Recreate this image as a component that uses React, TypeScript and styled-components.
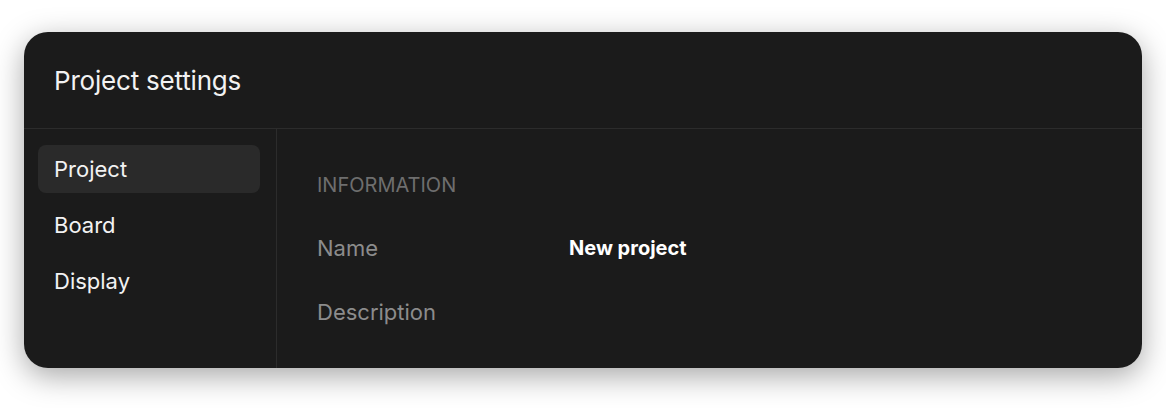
import React from 'react';
import styled, { createGlobalStyle } from 'styled-components';

const GlobalStyle = createGlobalStyle`
  html, body {
    margin: 0;
    padding: 0;
    background: #ffffff;
  }

  body {
    font-family: 'Inter', 'Noto Sans', sans-serif;
    -webkit-font-smoothing: antialiased;
  }

  * {
    box-sizing: border-box;
  }
`;

const Page = styled.div`
  padding: 32px 24px 40px;
`;

const Card = styled.div`
  display: flex;
  flex-direction: column;
  height: 336px;
  background-color: #1b1b1b;
  border-radius: 24px;
  overflow: hidden;
  box-shadow: 0 8px 30px rgba(0, 0, 0, 0.35);
`;

const Header = styled.div`
  display: flex;
  align-items: center;
  height: 97px;
  padding: 0 30px;
  border-bottom: 1px solid #2c2c2c;
`;

const Title = styled.h1`
  margin: 0;
  font-size: 26px;
  font-weight: 400;
  color: #f2f2f2;
  letter-spacing: -0.2px;
`;

const Body = styled.div`
  flex: 1;
  display: flex;
`;

const Sidebar = styled.nav`
  width: 253px;
  padding: 16px 16px 16px 14px;
  display: flex;
  flex-direction: column;
  gap: 8px;
  border-right: 1px solid #2c2c2c;
`;

const NavItem = styled.div<{ $active?: boolean }>`
  height: 48px;
  display: flex;
  align-items: center;
  padding: 0 16px;
  border-radius: 8px;
  font-size: 22px;
  color: #f2f2f2;
  background-color: ${({ $active }) => ($active ? '#2a2a2a' : 'transparent')};
`;

const Content = styled.section`
  flex: 1;
  padding: 44px 40px 0;
`;

const SectionLabel = styled.div`
  font-size: 20px;
  color: #6e6e6e;
  text-transform: uppercase;
  margin-bottom: 19px;
`;

const Row = styled.div`
  display: grid;
  grid-template-columns: 252px 1fr;
  align-items: center;
  height: 64px;
`;

const FieldLabel = styled.div`
  font-size: 22px;
  color: #8c8c8c;
`;

const FieldValue = styled.div`
  font-size: 20px;
  font-weight: 700;
  color: #ffffff;
`;

const navItems = ['Project', 'Board', 'Display'];

const fields = [
  { label: 'Name', value: 'New project' },
  { label: 'Description', value: '' },
];

export default function App() {
  return (
    <>
      <GlobalStyle />
      <Page>
        <Card>
          <Header>
            <Title>Project settings</Title>
          </Header>
          <Body>
            <Sidebar>
              {navItems.map((item) => (
                <NavItem key={item} $active={item === 'Project'}>
                  {item}
                </NavItem>
              ))}
            </Sidebar>
            <Content>
              <SectionLabel>Information</SectionLabel>
              {fields.map((field) => (
                <Row key={field.label}>
                  <FieldLabel>{field.label}</FieldLabel>
                  <FieldValue>{field.value}</FieldValue>
                </Row>
              ))}
            </Content>
          </Body>
        </Card>
      </Page>
    </>
  );
}
